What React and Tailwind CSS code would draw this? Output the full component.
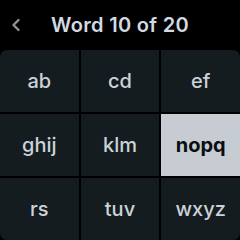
export default function App() {
  const cells = ["ab", "cd", "ef", "ghij", "klm", "nopq", "rs", "tuv", "wxyz"];
  return (
    <div className="w-[240px] h-[240px] bg-black overflow-hidden flex flex-col" style={{ fontFamily: "Inter, 'Noto Sans', sans-serif" }}>
      <div className="h-[50px] relative flex items-center justify-center">
        <svg className="absolute left-[11px] top-[18px]" width="10" height="14" viewBox="0 0 10 14">
          <path d="M7.5 2 L2.5 7 L7.5 12" fill="none" stroke="#8c9399" strokeWidth="2.4" strokeLinecap="round" strokeLinejoin="round" />
        </svg>
        <span className="text-[20px] font-semibold text-[#d3dbe1] mt-[1px] tracking-[0.3px]">Word 10 of 20</span>
      </div>
      <div className="grid grid-cols-3 grid-rows-3 gap-[2px] h-[192px] rounded-[7px] overflow-hidden">
        {cells.map((c) => (
          <div
            key={c}
            className={
              c === "nopq"
                ? "flex items-center justify-center bg-[#c6ccd2] text-[#0a0e11] text-[20px] font-bold"
                : "flex items-center justify-center bg-[#141c20] text-[#cbd2d8] text-[20px] font-medium"
            }
          >
            {c}
          </div>
        ))}
      </div>
    </div>
  );
}
